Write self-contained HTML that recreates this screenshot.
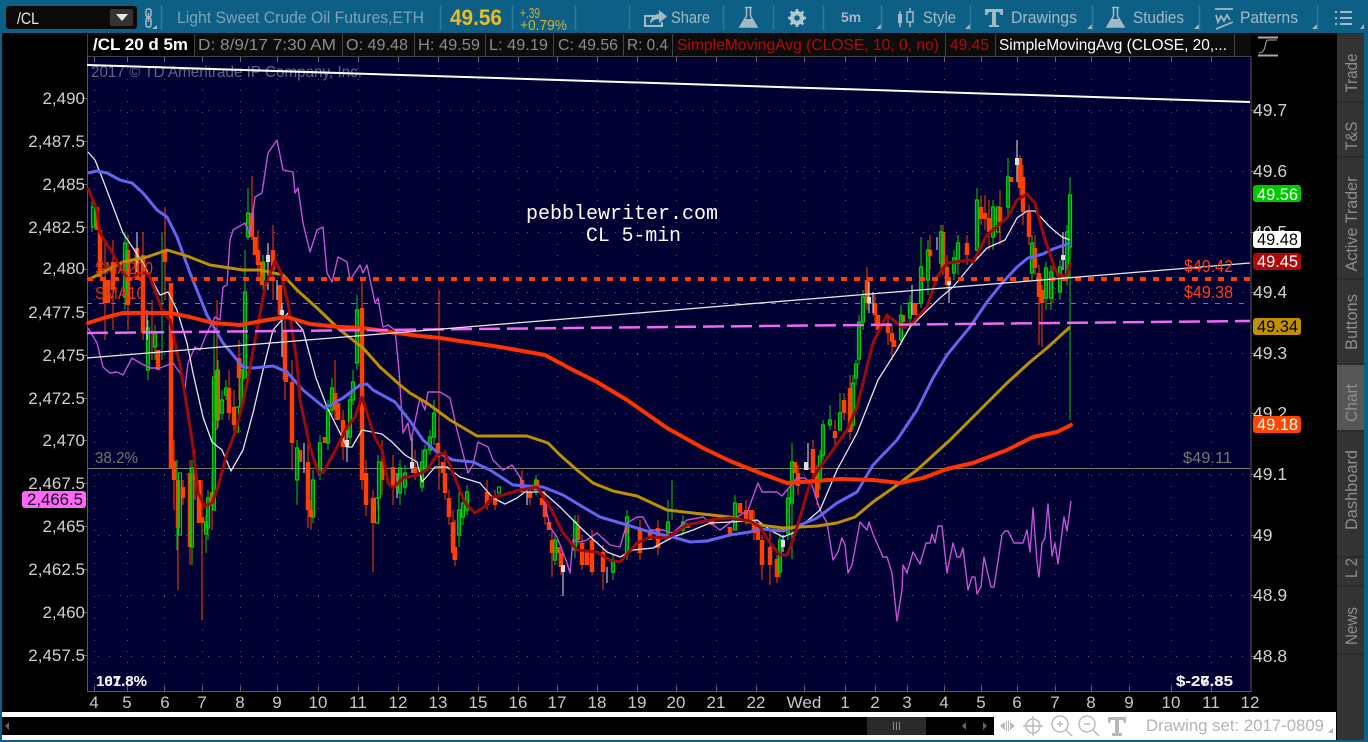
<!DOCTYPE html>
<html><head><meta charset="utf-8"><title>/CL chart</title>
<style>
html,body{margin:0;padding:0;background:#000;width:1368px;height:742px;overflow:hidden}
svg{display:block}
text{font-family:"Liberation Sans",sans-serif;white-space:pre}
.la text{font-size:17px;fill:#d0d0d0;text-anchor:end}
.ra text{font-size:17.5px;fill:#d0d0d0}
.ta text{font-size:17px;fill:#c8c8c8;text-anchor:middle}
.hd text{font-size:16px;fill:#8c8c8c}
.tb text{font-size:16.5px;fill:#a3bac6}
.sd text{font-size:16.5px;fill:#8e8e8e;text-anchor:middle}
</style></head><body>
<svg width="1368" height="742" viewBox="0 0 1368 742" xmlns="http://www.w3.org/2000/svg">
<rect width="1368" height="742" fill="#000"/>
<!-- blue frame -->
<rect width="1368" height="33" fill="#0e5f85"/>
<rect x="0" y="0" width="2" height="742" fill="#0e5f85"/>
<rect x="1364" y="0" width="4" height="742" fill="#0e5f85"/>
<rect x="0" y="740" width="1368" height="2" fill="#0e5f85"/>
<!-- top bar -->
<rect x="6" y="6" width="131" height="23" rx="3" fill="#0a0a0a"/>
<text x="17" y="24" font-size="17" fill="#e8e8e8" textLength="22" lengthAdjust="spacingAndGlyphs">/CL</text>
<rect x="110" y="9" width="23" height="17" rx="2" fill="#333"/>
<path d="M116 14h12l-6 7z" fill="#e8e8e8"/>
<g fill="none" stroke="#a3bac6" stroke-width="1.5"><rect x="146" y="9" width="5" height="8" rx="2"/><rect x="146" y="18" width="5" height="9" rx="2"/><path d="M148.500 13v9"/></g>
<path d="M152 29l5 0v-4z M876 29h5v-5z M965 29h5v-5z M1087 29h5v-5z M1194 29h5v-5z M1312 29h5v-5z M1360 29h4v-5z" fill="#a3bac6"/>
<path d="M161.500 5v25M440.500 5v25M512.500 5v25M575.500 5v25M629.500 5v25M723.500 5v25M773.500 5v25M823.500 5v25M881.500 5v25M970.500 5v25M1092.500 5v25M1199.500 5v25M1317.500 5v25" stroke="#2f7a9f" stroke-width="1.500"/>
<g class="tb">
<text x="177" y="23" style="fill:#7ba3b8;font-size:17px" textLength="247" lengthAdjust="spacingAndGlyphs">Light Sweet Crude Oil Futures,ETH</text>
<text x="671" y="23" textLength="39" lengthAdjust="spacingAndGlyphs">Share</text>
<text x="841" y="22" font-weight="bold" style="font-size:14px" textLength="20" lengthAdjust="spacingAndGlyphs">5m</text>
<text x="923" y="23" textLength="33" lengthAdjust="spacingAndGlyphs">Style</text>
<text x="1011" y="23" textLength="66" lengthAdjust="spacingAndGlyphs">Drawings</text>
<text x="1133" y="23" textLength="51" lengthAdjust="spacingAndGlyphs">Studies</text>
<text x="1240" y="23" textLength="58" lengthAdjust="spacingAndGlyphs">Patterns</text>
</g>
<text x="450" y="25" font-size="22" font-weight="bold" fill="#eebc1c" textLength="52" lengthAdjust="spacingAndGlyphs">49.56</text>
<text x="520" y="18" font-size="14.500" fill="#d8b030" textLength="20" lengthAdjust="spacingAndGlyphs">+.39</text>
<text x="520" y="30" font-size="14.500" fill="#d8b030" textLength="47" lengthAdjust="spacingAndGlyphs">+0.79%</text>
<!-- top icons -->
<path d="M659 16h-14v10h17v-4" fill="none" stroke="#a3bac6" stroke-width="2"/>
<path d="M650 24c0-6 4-10 9-10v-4l8 6.500-8 6.500v-4c-4 0-7 2-9 5z" fill="#a3bac6"/>
<path d="M745 7.500h7M746.500 8v8l-6.500 11h17l-6.500-11V8" fill="none" stroke="#a3bac6" stroke-width="1.500"/>
<path d="M744 19h9l4 8h-17z" fill="#a3bac6"/>
<circle cx="797" cy="18" r="5.500" fill="none" stroke="#b4c8d2" stroke-width="3"/>
<path d="M797 9v18M788 18h18M790.500 11.500l13 13M803.500 11.500l-13 13" stroke="#b4c8d2" stroke-width="2.500"/>
<circle cx="797" cy="18" r="2.800" fill="#0e5f85"/>
<path d="M900 11v16M910 8v19" stroke="#a3bac6" stroke-width="1.500"/>
<rect x="898" y="14" width="4" height="9" fill="#a3bac6"/><rect x="907" y="12" width="6" height="10" fill="#0e5f85" stroke="#a3bac6" stroke-width="1.500"/>
<path d="M985 9h18v6h-2l-2-3h-3v13h3v2h-10v-2h3V12h-3l-2 3h-2z" fill="#a3bac6"/>
<path d="M1112 7.500h7M1113.500 8v8l-6.500 11h17l-6.500-11V8" fill="none" stroke="#a3bac6" stroke-width="1.500"/>
<path d="M1111 19h9l4 8h-17z" fill="#a3bac6"/>
<path d="M1215 9h18M1216 15l2 7 3-6 3 5 3-6 3 5M1216 29l17-7" fill="none" stroke="#a3bac6" stroke-width="1.700"/>
<path d="M1335 12h2M1335 18h2M1335 24h2M1340 12h12M1340 18h12M1340 24h12" stroke="#a3bac6" stroke-width="2"/>
<!-- header row -->
<rect x="87" y="34" width="1164" height="22" fill="#0c0c0c"/>
<path d="M87.500 34v22M194.500 34v22M342.500 34v22M414.500 34v22M485.500 34v22M553.500 34v22M623.500 34v22M672.500 34v22M945.500 34v22M995.500 34v22M1234.500 34v22M87 56.500h1164" stroke="#444"/>
<rect x="88" y="34" width="106" height="22" fill="#000"/>
<g class="hd">
<text x="93" y="50" font-weight="bold" style="fill:#fff;font-size:16.500px" textLength="95" lengthAdjust="spacingAndGlyphs">/CL 20 d 5m</text>
<text x="198" y="50" textLength="138" lengthAdjust="spacingAndGlyphs">D: 8/9/17 7:30 AM</text>
<text x="346" y="50" textLength="62" lengthAdjust="spacingAndGlyphs">O: 49.48</text>
<text x="418" y="50" textLength="62" lengthAdjust="spacingAndGlyphs">H: 49.59</text>
<text x="489" y="50" textLength="59" lengthAdjust="spacingAndGlyphs">L: 49.19</text>
<text x="558" y="50" textLength="60" lengthAdjust="spacingAndGlyphs">C: 49.56</text>
<text x="627" y="50" textLength="41" lengthAdjust="spacingAndGlyphs">R: 0.4</text>
<text x="677" y="50" style="fill:#b80808" textLength="262" lengthAdjust="spacingAndGlyphs">SimpleMovingAvg (CLOSE, 10, 0, no)</text>
<text x="950" y="50" style="fill:#b80808" textLength="39" lengthAdjust="spacingAndGlyphs">49.45</text>
<text x="999" y="50" style="fill:#fff" textLength="228" lengthAdjust="spacingAndGlyphs">SimpleMovingAvg (CLOSE, 20,...</text>
</g>
<path d="M1258 37.500h20M1258 55.500h20" stroke="#aaa" stroke-width="2"/>
<path d="M1259 53c8 0 5-13 9-13s3 0 9 0" fill="none" stroke="#aaa"/>
<!-- chart -->
<rect x="87" y="57" width="1164" height="634" fill="#010032"/>
<!-- grid -->
<path d="M87 110.500H1250M87 171.500H1250M87 232.500H1250M87 292.500H1250M87 353.500H1250M87 413.500H1250M87 474.500H1250M87 535.500H1250M87 595.500H1250M87 656.500H1250" stroke="#5c5c80" stroke-dasharray="1 10"/>
<path d="M94.500 57V691M127.500 57V691M164.500 57V691M202.500 57V691M240.500 57V691M277.500 57V691M318.500 57V691M358.500 57V691M398.500 57V691M438.500 57V691M478.500 57V691M518.500 57V691M557.500 57V691M597.500 57V691M637.500 57V691M676.500 57V691M716.500 57V691M756.500 57V691M804.500 57V691M845.500 57V691M875.500 57V691M907.500 57V691M944.500 57V691M981.500 57V691M1017.500 57V691M1055.500 57V691M1091.500 57V691M1129.500 57V691M1171.500 57V691M1211.500 57V691" stroke="#50507a" stroke-dasharray="1 10"/>
<!-- ticks -->
<path d="M94.500 57v5M127.500 57v5M164.500 57v5M202.500 57v5M240.500 57v5M277.500 57v5M318.500 57v5M358.500 57v5M398.500 57v5M438.500 57v5M478.500 57v5M518.500 57v5M557.500 57v5M597.500 57v5M637.500 57v5M676.500 57v5M716.500 57v5M756.500 57v5M804.500 57v5M845.500 57v5M875.500 57v5M907.500 57v5M944.500 57v5M981.500 57v5M1017.500 57v5M1055.500 57v5M1091.500 57v5M1129.500 57v5M1171.500 57v5M1211.500 57v5M94.500 691v-5M127.500 691v-5M164.500 691v-5M202.500 691v-5M240.500 691v-5M277.500 691v-5M318.500 691v-5M358.500 691v-5M398.500 691v-5M438.500 691v-5M478.500 691v-5M518.500 691v-5M557.500 691v-5M597.500 691v-5M637.500 691v-5M676.500 691v-5M716.500 691v-5M756.500 691v-5M804.500 691v-5M845.500 691v-5M875.500 691v-5M907.500 691v-5M944.500 691v-5M981.500 691v-5M1017.500 691v-5M1055.500 691v-5M1091.500 691v-5M1129.500 691v-5M1171.500 691v-5M1211.500 691v-5M82 98.500h5M82 141.500h5M82 184.500h5M82 227.500h5M82 269.500h5M82 312.500h5M82 355.500h5M82 398.500h5M82 440.500h5M82 483.500h5M82 526.500h5M82 569.500h5M82 612.500h5M82 655.500h5M1251 110.500h5M1251 171.500h5M1251 232.500h5M1251 292.500h5M1251 353.500h5M1251 413.500h5M1251 474.500h5M1251 535.500h5M1251 595.500h5M1251 656.500h5" stroke="#666"/>
<path d="M87.500 56.500V691.500H1251V56.500" fill="none" stroke="#5a5a5a"/>
<text x="91" y="77" font-size="16" fill="#62628a" textLength="271" lengthAdjust="spacingAndGlyphs">2017 © TD Ameritrade IP Company, Inc.</text>
<!-- horizontal levels -->
<path d="M87 468.500H1250" stroke="#7c7c6c" stroke-width="1"/>
<path d="M87 303.500H1250" stroke="#ff4a14" stroke-width="1" stroke-dasharray="5 7"/>
<!-- orange wicks -->
<path fill="none" stroke="#ff4000" stroke-width="1" d="M105 240V340M113 240V330M128 235V330M143 232V340M152 300V360M165 207V300M174 440V510M178 480V590M183 480V505M190 460V565M195 450V500M202 480V620M212 470V530M217 300V430M229 370V420M234 390V435M239 340V400M252 176V240M258 230V280M273 225V300M285 320V400M292 360V470M308 440V528M311 500V530M335 360V420M343 410V460M362 280V490M366 460V516M373 490V572M382 440V495M393 455V505M415 450V480M439 290V490M445 450V500M449 490V525M453 510V560M455 520V566M487 480V510M495 490V510M522 470V495M530 485V505M545 490V525M552 530V577M561 545V575M578 515V545M582 535V570M592 530V575M603 545V590M640 520V560M658 520V555M746 500V525M754 510V540M762 535V580M770 530V585M777 555V583M798 465V495M813 440V480M817 465V505M835 420V445M844 393V420M850 375V440M867 267V310M875 295V325M888 315V345M892 325V360M930 235V270M943 225V275M947 255V290M967 235V265M981 195V225M985 195V230M989 200V250M1000 190V245M1020 155V195M1023 165V225M1029 205V245M1035 235V275M1039 265V345M1042 285V347M1053 260V303"/>
<!-- green wicks -->
<path fill="none" stroke="#00d000" stroke-width="1" d="M92 200V232M125 232V310M148 320V380M155 325V360M162 232V360M177 460V550M192 460V565M206 515V553M208 490V540M214 330V510M218 360V428M222 390V420M226 380V400M241 360V412M245 250V378M248 188V240M263 255V290M297 440V505M313 470V523M320 435V480M328 400V450M332 378V415M350 395V445M353 370V405M357 295V370M378 455V510M400 460V505M405 465V495M422 450V492M425 445V470M430 430V455M434 400V445M459 492V547M463 495V525M467 485V515M536 475V495M555 535V565M575 515V558M613 555V580M627 510V560M668 500V540M672 480V520M683 515V535M735 495V530M780 535V578M788 490V540M792 443V559M820 450V490M823 420V460M830 405V430M840 393V430M853 375V430M856 360V385M859 315V365M863 290V330M901 305V345M910 295V330M921 237V308M928 240V295M941 225V270M954 250V280M958 235V275M977 188V258M993 200V250M1008 158V215M1032 235V280M1046 262V310M1051 265V310M1060 260V300M1067 225V285M1070 177V420"/>
<!-- orange bodies -->
<path fill="none" stroke="#ff4000" stroke-width="4.500" d="M97 207V230M100 230V277M105 280V303M108 280V303M113 262V290M128 250V305M137 248V280M143 255V333M158 350V370M165 250V262M171 283V468M174 461V480M178 480V528M183 487V498M190 473V547M195 473V480M199 480V523M202 517V523M212 492V506M217 370V420M229 388V413M234 407V425M239 358V378M252 213V237M255 237V255M258 250V265M262 262V285M273 250V270M280 285V315M285 330V380M286 370V382M292 382V443M300 450V462M308 462V510M311 510V517M325 437V443M335 393V410M338 403V420M343 420V447M362 308V480M366 473V505M373 498V523M382 462V480M393 467V488M415 467V473M438 443V457M443 462V473M445 473V493M449 498V517M453 522V553M455 547V560M487 492V505M495 498V505M522 480V492M530 492V498M537 480V490M542 498V505M545 503V517M549 522V530M552 540V553M558 547V553M561 553V567M578 527V540M582 543V565M587 552V565M592 540V572M603 552V572M627 527V533M640 528V553M650 533V540M658 528V548M688 523V528M712 520V525M730 527V535M740 503V513M746 510V520M751 510V520M754 520V533M758 523V540M762 540V565M770 547V565M777 559V577M795 462V473M798 473V486M813 449V473M817 473V498M835 431V438M844 400V413M850 388V432M867 280V303M875 303V315M878 315V330M888 323V333M892 333V342M894 340V347M903 315V322M915 303V315M930 250V256M943 232V267M947 267V285M967 243V255M981 207V219M985 213V219M989 218V232M1000 207V222M1011 177V182M1020 158V188M1023 177V212M1029 212V237M1035 248V268M1039 273V297M1042 290V303"/>
<!-- green hollow bodies -->
<path fill="none" stroke="#00d000" stroke-width="1.200" d="M91.500 207h3v20h-3zM123.500 243h3v54h-3zM146.500 328h3v42h-3zM153.500 333h3v14h-3zM178.500 473h3v62h-3zM190.500 468h3v79h-3zM204.500 522h3v12h-3zM206.500 498h3v30h-3zM212.500 377h3v133h-3zM216.500 370h3v50h-3zM220.500 400h3v13h-3zM224.500 388h3v7h-3zM235.500 407h3v25h-3zM239.500 370h3v37h-3zM243.500 292h3v86h-3zM246.500 213h3v24h-3zM261.500 262h3v18h-3zM295.500 448h3v32h-3zM311.500 480h3v37h-3zM318.500 443h3v30h-3zM326.500 410h3v33h-3zM330.500 388h3v22h-3zM348.500 400h3v37h-3zM351.500 382h3v18h-3zM355.500 310h3v53h-3zM375.500 498h3v25h-3zM377.500 462h3v36h-3zM398.500 468h3v25h-3zM403.500 473h3v14h-3zM420.500 462h3v25h-3zM423.500 450h3v17h-3zM428.500 437h3v13h-3zM432.500 413h3v24h-3zM457.500 510h3v25h-3zM461.500 503h3v14h-3zM465.500 492h3v18h-3zM497.500 487h3v6h-3zM534.500 480h3v10h-3zM553.500 540h3v20h-3zM573.500 522h3v28h-3zM611.500 562h3v10h-3zM625.500 517h3v36h-3zM666.500 522h3v11h-3zM681.500 522h3v8h-3zM733.500 503h3v27h-3zM778.500 540h3v32h-3zM786.500 498h3v35h-3zM790.500 462h3v41h-3zM818.500 456h3v24h-3zM821.500 425h3v30h-3zM828.500 420h3v5h-3zM838.500 413h3v17h-3zM851.500 383h3v42h-3zM854.500 364h3v14h-3zM857.500 322h3v37h-3zM861.500 297h3v25h-3zM899.500 315h3v25h-3zM908.500 303h3v15h-3zM919.500 267h3v36h-3zM926.500 250h3v30h-3zM939.500 232h3v31h-3zM952.500 258h3v15h-3zM956.500 243h3v20h-3zM975.500 200h3v50h-3zM991.500 207h3v30h-3zM996.500 207h3v25h-3zM1006.500 177h3v30h-3zM1030.500 243h3v30h-3zM1044.500 268h3v30h-3zM1049.500 272h3v26h-3zM1058.500 267h3v25h-3zM1065.500 232h3v46h-3zM1068.500 195h3v52h-3z"/>
<!-- white candles -->
<path fill="none" stroke="#e8e8e8" stroke-width="1" d="M137 232V275M147 310V340M268 243V290M277 280V300M282 303V357M304 443V473M347 427V462M397 473V498M412 437V473M563 565V596M607 567V583M527 487V505M783 535V552M808 443V470M869 282V313M873 292V313M912 285V315M937 237V250M949 281V303M1017 140V182M1063 232V270"/>
<path fill="none" stroke="#e0e0e0" stroke-width="4" d="M268 255V262M282 310V315M347 440V447M412 462V468M563 565V572M783 540V547M806 462V470M869 297V303M949 281V285M1017 158V165M1063 255V260"/>
<!-- thin magenta -->
<polyline fill="none" stroke="#c452d6" stroke-width="1.400" stroke-linejoin="round" points="88,328 97,343 103,367 110,373 117,372 123,375 132,358 140,363 150,368 160,368 173,363 180,373 185,388 188,363 195,347 200,350 207,333 215,317 220,320 223,287 227,285 230,240 233,230 245,223 250,235 255,197 262,193 268,153 277,140 283,170 293,172 295,193 298,188 303,223 310,252 317,230 323,227 327,273 332,282 338,257 347,262 350,280 360,265 363,273 367,265 375,303 378,298 383,327 388,325 395,330 399,370 403,433 408,423 411,440 420,398 425,410 428,392 440,392 450,398 457,430 468,473 473,465 478,442 488,447 493,460 503,470 512,465 520,477 523,487 538,490 543,495 550,527 557,537 567,563 570,573 573,540 580,542 587,540 597,533 610,545 620,547 627,523 637,517 643,517 650,530 663,530 673,533 687,520 703,517 720,530 743,513 747,513 758,483 762,492 777,492 782,496 797,478 805,478 812,485 820,510 827,523 833,560 838,552 842,538 845,545 848,573 852,565 860,522 867,530 869,522 873,534 883,557 887,557 892,573 897,621 902,590 903,565 907,573 913,552 920,564 926,543 930,543 932,534 935,543 938,526 942,526 947,573 953,543 957,557 960,557 963,548 968,590 972,577 975,577 977,594 981,587 984,557 991,587 994,587 1002,535 1005,531 1008,531 1014,543 1023,543 1027,530 1030,552 1033,508 1037,562 1039,577 1042,543 1045,538 1048,504 1052,556 1055,543 1058,564 1064,517 1067,531 1071,501"/>
<!-- thin white -->
<polyline fill="none" stroke="#e8e8e8" stroke-width="1.300" stroke-linejoin="round" points="88,152 95,160 103,180 123,233 143,263 160,295 168,292 177,310 187,343 193,373 203,417 212,442 222,450 231,471 243,450 253,413 263,370 273,330 288,313 303,330 316,378 327,407 347,447 352,447 362,430 382,434 392,442 405,455 417,462 422,482 435,467 447,467 460,477 480,483 493,498 505,504 517,498 525,492 543,492 560,507 583,530 607,552 620,557 633,550 653,548 673,537 693,530 710,523 750,521 757,520 770,530 783,537 793,533 820,510 837,470 857,433 878,380 897,350 910,327 940,298 953,287 973,263 987,248 1005,240 1017,218 1027,211 1035,211 1050,227 1062,237 1070,240"/>
<!-- blue -->
<polyline fill="none" stroke="#6464ec" stroke-width="3" stroke-linejoin="round" points="88,173 97,171 107,173 120,180 132,183 143,193 157,210 167,217 177,237 190,273 207,315 223,343 243,367 253,368 273,366 287,372 303,390 325,408 343,398 360,385 367,384 373,390 395,402 410,421 423,440 437,452 453,460 473,462 490,470 513,485 543,487 563,495 583,507 600,517 627,525 650,532 673,537 690,542 707,541 730,535 750,532 760,529 783,531 800,525 817,518 837,503 857,492 873,465 897,440 917,410 933,378 947,355 970,327 987,302 1003,282 1017,267 1028,258 1043,254 1053,249 1070,243"/>
<!-- gold -->
<polyline fill="none" stroke="#bc9000" stroke-width="3" stroke-linejoin="round" points="88,280 107,270 123,262 147,257 167,250 187,256 210,265 243,270 260,270 283,275 297,290 317,308 340,330 363,348 380,367 400,385 410,393 427,403 450,420 467,430 477,436 510,436 527,436 548,443 560,455 577,470 593,483 613,491 637,496 667,510 693,513 730,517 750,522 760,525 783,528 817,526 837,523 855,517 873,502 893,488 917,470 950,440 980,410 1007,383 1030,362 1047,348 1070,327"/>
<!-- dark red -->
<polyline fill="none" stroke="#9c0a0a" stroke-width="3" stroke-linejoin="round" points="88,188 97,210 100,233 112,252 123,273 130,280 138,273 148,273 155,290 163,313 170,320 180,365 187,407 193,447 198,493 205,506 212,503 218,487 227,453 235,433 243,403 248,378 257,330 265,287 275,261 280,270 288,303 297,363 300,400 310,447 318,472 323,473 337,447 347,427 355,417 362,397 367,413 375,438 382,450 388,483 393,488 403,478 417,475 427,470 437,455 445,453 453,473 465,503 475,513 483,508 493,497 503,495 520,490 537,487 550,507 563,533 577,550 597,552 610,560 620,562 637,543 650,537 667,538 687,525 710,520 730,518 750,521 760,527 770,543 780,555 787,555 793,540 800,517 810,483 820,467 833,450 847,430 857,407 863,383 873,343 887,315 903,328 913,322 927,307 937,277 947,263 970,260 973,262 987,235 1007,218 1017,200 1027,194 1035,203 1043,233 1052,260 1058,276 1067,275 1071,262"/>
<!-- SMA 200 orange -->
<polyline fill="none" stroke="#ff3300" stroke-width="4" stroke-linejoin="round" stroke-linecap="round" points="88,323 107,317 123,313 143,313 170,313 190,317 213,323 240,325 267,320 287,317 310,324 340,327 363,328 397,333 420,336 440,338 500,347 545,355 573,370 597,382 627,400 667,428 703,448 730,461 760,473 787,483 817,481 840,479 873,480 900,483 923,478 947,469 973,463 1007,450 1033,437 1057,432 1071,425"/>
<!-- dotted / dashed overlays -->
<path d="M87 279H1250" stroke="#ff3d00" stroke-width="4" stroke-dasharray="6 7"/>
<path d="M87 333 L1250 321" stroke="#f068f0" stroke-width="2.500" stroke-dasharray="21 7" fill="none"/>
<path d="M87 358L1250 263" stroke="#ececec" stroke-width="1.300" fill="none"/>
<path d="M87 65L1250 102" stroke="#fff" stroke-width="2" fill="none"/>
<!-- chart labels -->
<text x="95" y="274" font-size="17.500" fill="#e0380c" textLength="58" lengthAdjust="spacingAndGlyphs">SMA200</text>
<text x="95" y="299" font-size="17.500" fill="#e0380c" textLength="50" lengthAdjust="spacingAndGlyphs">SMA10</text>
<text x="95" y="463" font-size="16" fill="#76766c" textLength="43" lengthAdjust="spacingAndGlyphs">38.2%</text>
<text x="1183" y="463" font-size="16" fill="#76766c" textLength="49" lengthAdjust="spacingAndGlyphs">$49.11</text>
<text x="1184" y="272" font-size="17.500" fill="#ff3d10" textLength="49" lengthAdjust="spacingAndGlyphs">$49.42</text>
<text x="1184" y="298" font-size="17.500" fill="#ff3d10" textLength="49" lengthAdjust="spacingAndGlyphs">$49.38</text>
<text x="526" y="219" fill="#fff" style="font-family:'Liberation Mono',monospace;font-size:20px" textLength="192" lengthAdjust="spacingAndGlyphs">pebblewriter.com</text>
<text x="586" y="241" fill="#fff" style="font-family:'Liberation Mono',monospace;font-size:20px" textLength="95" lengthAdjust="spacingAndGlyphs">CL 5-min</text>
<g font-size="14.500" font-weight="bold" fill="#f0f0f0">
<text x="96" y="686" textLength="51" lengthAdjust="spacingAndGlyphs">107.8%</text>
<text x="96" y="686" textLength="51" lengthAdjust="spacingAndGlyphs">161.8%</text>
<text x="1176" y="686" textLength="57" lengthAdjust="spacingAndGlyphs">$-26.85</text>
<text x="1176" y="686" textLength="57" lengthAdjust="spacingAndGlyphs">$-27.35</text>
</g>
<!-- left axis -->
<g class="la">
<text x="85" y="104">2,490</text><text x="85" y="147">2,487.5</text><text x="85" y="190">2,485</text><text x="85" y="233">2,482.5</text><text x="85" y="274">2,480</text><text x="85" y="318">2,477.5</text><text x="85" y="361">2,475</text><text x="85" y="404">2,472.5</text><text x="85" y="446">2,470</text><text x="85" y="489">2,467.5</text><text x="85" y="532">2,465</text><text x="85" y="575">2,462.5</text><text x="85" y="618">2,460</text><text x="85" y="661">2,457.5</text>
</g>
<rect x="22" y="491" width="64" height="17" rx="3" fill="#ff66ff"/>
<text x="27" y="505" font-size="16.500" fill="#111" textLength="56" lengthAdjust="spacingAndGlyphs">2,466.5</text>
<!-- right axis -->
<g class="ra">
<text x="1253" y="116">49.7</text><text x="1253" y="177">49.6</text><text x="1253" y="238">49.5</text><text x="1253" y="298">49.4</text><text x="1253" y="359">49.3</text><text x="1253" y="419">49.2</text><text x="1253" y="480">49.1</text><text x="1253" y="541">49</text><text x="1253" y="601">48.9</text><text x="1253" y="662">48.8</text>
</g>
<g>
<rect x="1253" y="185" width="48" height="17" rx="3" fill="#00c800"/><text x="1257" y="200" fill="#fff" font-size="17" textLength="41" lengthAdjust="spacingAndGlyphs">49.56</text>
<rect x="1253" y="231" width="48" height="17" rx="3" fill="#fff"/><text x="1257" y="245" fill="#000" font-size="17" textLength="41" lengthAdjust="spacingAndGlyphs">49.48</text>
<rect x="1253" y="253" width="48" height="17" rx="3" fill="#b00808"/><text x="1257" y="267" fill="#fff" font-size="17" textLength="41" lengthAdjust="spacingAndGlyphs">49.45</text>
<rect x="1253" y="318" width="48" height="17" rx="3" fill="#c09000"/><text x="1257" y="332" fill="#000" font-size="17" textLength="41" lengthAdjust="spacingAndGlyphs">49.34</text>
<rect x="1253" y="416" width="48" height="17" rx="3" fill="#ff4500"/><text x="1257" y="430" fill="#fff" font-size="17" textLength="41" lengthAdjust="spacingAndGlyphs">49.18</text>
</g>
<!-- time axis -->
<g class="ta">
<text x="94" y="708">4</text><text x="127" y="708">5</text><text x="165" y="708">6</text><text x="202" y="708">7</text><text x="240" y="708">8</text><text x="277" y="708">9</text><text x="318" y="708">10</text><text x="358" y="708">11</text><text x="398" y="708">12</text><text x="438" y="708">13</text><text x="478" y="708">15</text><text x="518" y="708">16</text><text x="557" y="708">17</text><text x="597" y="708">18</text><text x="637" y="708">19</text><text x="676" y="708">20</text><text x="716" y="708">21</text><text x="756" y="708">22</text><text x="804" y="708">Wed</text><text x="845" y="708">1</text><text x="875" y="708">2</text><text x="907" y="708">3</text><text x="944" y="708">4</text><text x="981" y="708">5</text><text x="1017" y="708">6</text><text x="1055" y="708">7</text><text x="1091" y="708">8</text><text x="1129" y="708">9</text><text x="1171" y="708">10</text><text x="1211" y="708">11</text><text x="1250" y="708">12</text>
</g>
<!-- bottom bar -->
<rect x="2" y="712" width="1334" height="28" fill="#fff"/>
<rect x="2" y="717" width="992" height="18" fill="#000"/>
<rect x="867" y="717" width="59" height="18" fill="#2a2a2a"/>
<path d="M893.500 722v8M896.500 722v8M899.500 722v8" stroke="#888"/>
<path d="M9 722v8l-4-4zM966 722v8l-4-4zM983 722v8l4-4z" fill="#666"/>
<path d="M1005 722v8l-5-4zM1010 722v8l5-4z" fill="#b8b8b8"/>
<path d="M1006.500 721v10M1008.500 721v10" stroke="#b8b8b8"/>
<g fill="none" stroke="#bbb" stroke-width="1.500">
<circle cx="1033" cy="726" r="7"/><path d="M1033 716v20M1023 726h20"/>
<circle cx="1060" cy="724" r="8"/><path d="M1066 730l6 6M1057 724h6M1060 721v6"/>
<circle cx="1087" cy="724" r="8"/><path d="M1093 730l6 6M1084 724h6"/>
</g>
<path d="M1108 717h18v6h-2l-1-3h-4v13h3v3h-10v-3h3v-13h-4l-1 3h-2z" fill="#b8b8b8"/>
<text x="1146" y="731" font-size="16.500" fill="#b4b4b4" textLength="178" lengthAdjust="spacingAndGlyphs">Drawing set: 2017-0809</text>
<path d="M1328 733h5v-5z" fill="#b4b4b4"/>
<!-- sidebar -->
<rect x="1337" y="33" width="27" height="707" fill="#2b2b2b"/>
<rect x="1337" y="34" width="27" height="67" fill="#333"/>
<rect x="1337" y="103" width="27" height="53" fill="#333"/>
<rect x="1337" y="158" width="27" height="120" fill="#333"/>
<rect x="1337" y="280" width="27" height="83" fill="#333"/>
<rect x="1337" y="365" width="27" height="65" fill="#565656"/>
<rect x="1337" y="432" width="27" height="124" fill="#333"/>
<rect x="1337" y="558" width="27" height="27" fill="#333"/>
<rect x="1337" y="587" width="27" height="66" fill="#333"/>
<rect x="1337" y="655" width="27" height="85" fill="#333"/>
<g class="sd">
<text transform="translate(1357,73) rotate(-90)" textLength="39" lengthAdjust="spacingAndGlyphs">Trade</text>
<text transform="translate(1357,136) rotate(-90)" textLength="29" lengthAdjust="spacingAndGlyphs">T&amp;S</text>
<text transform="translate(1357,224) rotate(-90)" textLength="95" lengthAdjust="spacingAndGlyphs">Active Trader</text>
<text transform="translate(1357,322) rotate(-90)" textLength="56" lengthAdjust="spacingAndGlyphs">Buttons</text>
<text transform="translate(1357,403) rotate(-90)" textLength="38" lengthAdjust="spacingAndGlyphs">Chart</text>
<text transform="translate(1357,490) rotate(-90)" textLength="80" lengthAdjust="spacingAndGlyphs">Dashboard</text>
<text transform="translate(1357,568) rotate(-90)" textLength="20" lengthAdjust="spacingAndGlyphs">L 2</text>
<text transform="translate(1357,626) rotate(-90)" textLength="38" lengthAdjust="spacingAndGlyphs">News</text>
</g>
</svg>
</body></html>
